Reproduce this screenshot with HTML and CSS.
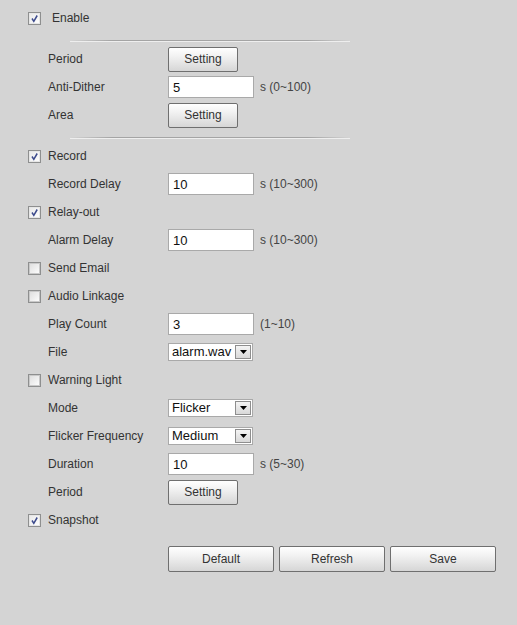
FILE: index.html
```html
<!DOCTYPE html>
<html>
<head>
<meta charset="utf-8">
<link rel="stylesheet" href="styles.css">
</head>
<body>
<div class="page">
  <div class="row check-row enable-row">
    <span class="cb checked"><svg viewBox="0 0 13 13" width="13" height="13"><path d="M4 6.5 L5.8 9.3 L9.2 3.5" fill="none" stroke="#3c4a8c" stroke-width="1.5"/></svg></span>
    <span class="cb-label">Enable</span>
  </div>
  <div class="divider"><div class="line"></div></div>
  <div class="row field-row">
    <span class="label">Period</span>
    <button class="btn small">Setting</button>
  </div>
  <div class="row field-row">
    <span class="label">Anti-Dither</span>
    <input class="txt" type="text" value="5">
    <span class="unit">s (0~100)</span>
  </div>
  <div class="row field-row">
    <span class="label">Area</span>
    <button class="btn small">Setting</button>
  </div>
  <div class="divider"><div class="line"></div></div>
  <div class="row check-row">
    <span class="cb checked"><svg viewBox="0 0 13 13" width="13" height="13"><path d="M4 6.5 L5.8 9.3 L9.2 3.5" fill="none" stroke="#3c4a8c" stroke-width="1.5"/></svg></span>
    <span class="cb-label">Record</span>
  </div>
  <div class="row field-row">
    <span class="label">Record Delay</span>
    <input class="txt" type="text" value="10">
    <span class="unit">s (10~300)</span>
  </div>
  <div class="row check-row">
    <span class="cb checked"><svg viewBox="0 0 13 13" width="13" height="13"><path d="M4 6.5 L5.8 9.3 L9.2 3.5" fill="none" stroke="#3c4a8c" stroke-width="1.5"/></svg></span>
    <span class="cb-label">Relay-out</span>
  </div>
  <div class="row field-row">
    <span class="label">Alarm Delay</span>
    <input class="txt" type="text" value="10">
    <span class="unit">s (10~300)</span>
  </div>
  <div class="row check-row">
    <span class="cb"></span>
    <span class="cb-label">Send Email</span>
  </div>
  <div class="row check-row">
    <span class="cb"></span>
    <span class="cb-label">Audio Linkage</span>
  </div>
  <div class="row field-row">
    <span class="label">Play Count</span>
    <input class="txt" type="text" value="3">
    <span class="unit">(1~10)</span>
  </div>
  <div class="row field-row">
    <span class="label">File</span>
    <div class="sel"><span class="sel-text">alarm.wav</span><span class="arrow"><svg viewBox="0 0 7 4" width="7" height="4"><path d="M0 0 H7 L3.5 4 Z" fill="#000"/></svg></span></div>
  </div>
  <div class="row check-row">
    <span class="cb"></span>
    <span class="cb-label">Warning Light</span>
  </div>
  <div class="row field-row">
    <span class="label">Mode</span>
    <div class="sel"><span class="sel-text">Flicker</span><span class="arrow"><svg viewBox="0 0 7 4" width="7" height="4"><path d="M0 0 H7 L3.5 4 Z" fill="#000"/></svg></span></div>
  </div>
  <div class="row field-row">
    <span class="label">Flicker Frequency</span>
    <div class="sel"><span class="sel-text">Medium</span><span class="arrow"><svg viewBox="0 0 7 4" width="7" height="4"><path d="M0 0 H7 L3.5 4 Z" fill="#000"/></svg></span></div>
  </div>
  <div class="row field-row">
    <span class="label">Duration</span>
    <input class="txt" type="text" value="10">
    <span class="unit">s (5~30)</span>
  </div>
  <div class="row field-row">
    <span class="label">Period</span>
    <button class="btn small">Setting</button>
  </div>
  <div class="row check-row">
    <span class="cb checked"><svg viewBox="0 0 13 13" width="13" height="13"><path d="M4 6.5 L5.8 9.3 L9.2 3.5" fill="none" stroke="#3c4a8c" stroke-width="1.5"/></svg></span>
    <span class="cb-label">Snapshot</span>
  </div>
  <div class="actions">
    <button class="btn big">Default</button>
    <button class="btn big">Refresh</button>
    <button class="btn big">Save</button>
  </div>
</div>
</body>
</html>
```
FILE: styles.css
```css
html, body {
  margin: 0;
  padding: 0;
  background: #d4d4d4;
}
body {
  width: 517px;
  height: 625px;
  overflow: hidden;
  font-family: "Liberation Sans", Arial, sans-serif;
  font-size: 12px;
  color: #333;
}
.page {
  padding: 4px 0 0 28px;
}
.row {
  display: flex;
  align-items: center;
  height: 28px;
}
.cb {
  box-sizing: border-box;
  width: 13px;
  height: 13px;
  border: 1px solid #8e8f8f;
  background: linear-gradient(135deg, #dcdcdc, #ffffff);
  box-shadow: inset 0 0 0 1px #c9c9c9;
  flex: none;
  position: relative;
}
.cb svg {
  position: absolute;
  left: -1px;
  top: -1px;
}
.cb.checked {
  box-shadow: inset 0 0 0 1px #e6e6e6;
  background: linear-gradient(135deg, #e8e8e8, #ffffff);
}
.cb-label {
  margin-left: 7px;
}
.enable-row .cb-label {
  margin-left: 11px;
}
.divider {
  box-sizing: border-box;
  height: 13px;
  padding-top: 8px;
}
.divider .line {
  margin-left: 42px;
  width: 280px;
  height: 1px;
  background: linear-gradient(to right, rgba(160,160,160,0), #a4a4a4 15%, #a4a4a4 85%, rgba(160,160,160,0));
  box-shadow: 0 1px 0 rgba(255,255,255,0.6);
}
.field-row .label {
  width: 120px;
  padding-left: 20px;
  flex: none;
}
.txt {
  box-sizing: border-box;
  width: 86px;
  height: 22px;
  margin: 0;
  border: 1px solid #a9a9a9;
  background: #fff;
  padding: 0 0 0 4px;
  font-family: "Liberation Sans", Arial, sans-serif;
  font-size: 13px;
  color: #111;
  outline: none;
}
.unit {
  margin-left: 6px;
  color: #444;
}
.btn {
  box-sizing: border-box;
  margin: 0;
  padding: 0;
  border: 1px solid #6f6f6f;
  border-radius: 2px;
  background: linear-gradient(to bottom, #ffffff 0%, #f0f0f0 40%, #d6d6d6 100%);
  font-family: "Liberation Sans", Arial, sans-serif;
  font-size: 12px;
  color: #333;
}
.btn.small {
  width: 70px;
  height: 25px;
}
.sel {
  box-sizing: border-box;
  width: 85px;
  height: 18px;
  border: 1px solid #a9a9a9;
  background: #fff;
  display: flex;
  align-items: center;
  justify-content: space-between;
  padding: 0 1px 0 3px;
}
.sel-text {
  font-size: 13px;
  color: #111;
  line-height: 16px;
}
.arrow {
  box-sizing: border-box;
  width: 16px;
  height: 14px;
  border: 1px solid #8e8e8e;
  background: linear-gradient(to bottom, #f4f4f4, #d8d8d8);
  display: flex;
  align-items: center;
  justify-content: center;
}
.actions {
  display: flex;
  gap: 5px;
  margin: 12px 0 0 140px;
}
.btn.big {
  width: 106px;
  height: 26px;
}
```
